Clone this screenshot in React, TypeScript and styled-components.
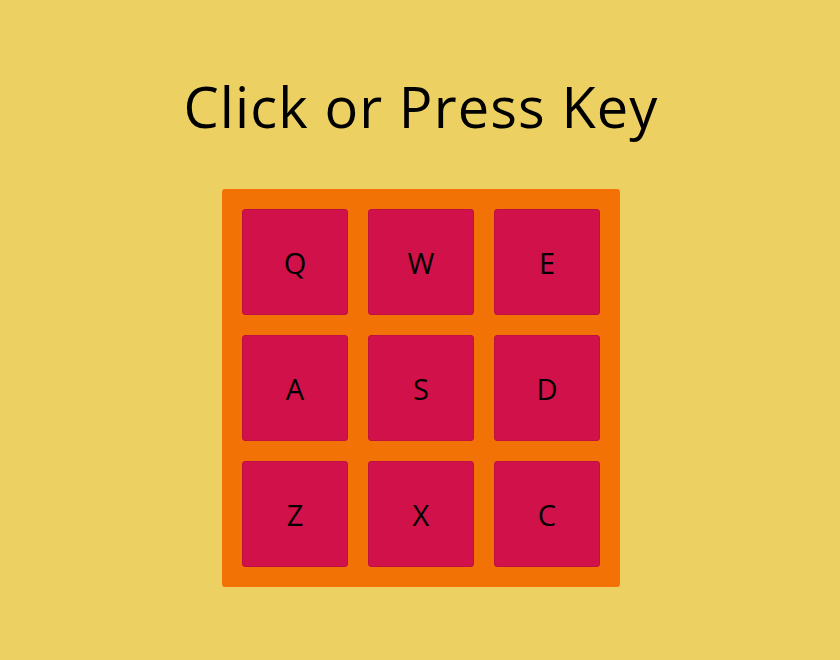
import React from "react";
import styled, { createGlobalStyle } from "styled-components";

const Global = createGlobalStyle`
  html, body { margin: 0; padding: 0; }
  body {
    background: #ecd062;
    font-family: "Open Sans", "Lato", sans-serif;
    color: #000;
  }
`;

const Page = styled.div`
  display: flex;
  flex-direction: column;
  align-items: center;
  padding: 74px 0 0 2px;
`;

const Title = styled.h1`
  margin: 0 0 51px;
  font-size: 56px;
  font-weight: 400;
  line-height: 64px;
  letter-spacing: 1.1px;
`;

const Board = styled.div`
  display: grid;
  grid-template-columns: repeat(3, 106px);
  grid-auto-rows: 106px;
  gap: 20px;
  padding: 20px;
  background: #f27205;
  border-radius: 3px;
`;

const Key = styled.div`
  box-sizing: border-box;
  display: flex;
  align-items: center;
  justify-content: center;
  background: #d11149;
  border: 1px solid #bf1044;
  border-radius: 3px;
  font-size: 29px;
  font-weight: 400;
`;

const keys = ["Q", "W", "E", "A", "S", "D", "Z", "X", "C"];

export default function App() {
  return (
    <>
      <Global />
      <Page>
        <Title>Click or Press Key</Title>
        <Board>
          {keys.map((k) => (
            <Key key={k}>{k}</Key>
          ))}
        </Board>
      </Page>
    </>
  );
}
